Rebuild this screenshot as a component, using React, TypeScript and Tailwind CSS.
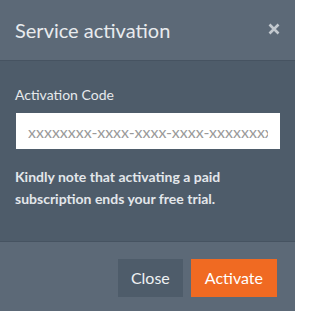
import { useState } from "react";

// Service activation modal: code entry with a notice about the trial.
export default function App() {
  const [code, setCode] = useState("");

  return (
    <div className="flex h-[311px] w-[295px] flex-col bg-[#4e5c6a] font-['Lato',sans-serif]">
      <div className="flex h-[61px] shrink-0 items-center justify-between border-b border-[#465361] bg-[#5c6977] pl-[15px] pr-[15px]">
        <h2 className="text-[20px] leading-none text-[#e8ebee]">Service activation</h2>
        <button type="button" aria-label="Close" className="mb-[3px] text-[#c3c9cf]">
          <svg width="12" height="12" viewBox="0 0 12 12">
            <path d="M1.5 1.5 L10.5 10.5 M10.5 1.5 L1.5 10.5" stroke="currentColor" strokeWidth="2.6" strokeLinecap="butt" />
          </svg>
        </button>
      </div>

      <div className="flex flex-1 flex-col px-[15px] pt-[24px]">
        <label className="flex flex-col text-[14px] leading-[20px] text-[#e6e9ec]">
          Activation Code
          <input
            type="text"
            value={code}
            onChange={(event) => setCode(event.target.value)}
            placeholder="xxxxxxxx-xxxx-xxxx-xxxx-xxxxxxxxxxxx"
            className="mt-[8px] ml-px h-[36px] w-[264px] bg-white px-[12px] font-['Lato',sans-serif] text-[16px] text-[#555] outline-none placeholder:text-[#9a9a9a]"
          />
        </label>
        <p className="mt-[17px] text-[14px] font-bold leading-[22px] text-[#e3e7eb]">
          Kindly note that activating a paid subscription ends your free trial.
        </p>
      </div>

      <div className="flex h-[70px] shrink-0 items-start justify-end gap-[8px] border-t border-[#465361] bg-[#5c6977] pr-[18px] pt-[17px]">
        <button type="button" className="h-[38px] bg-[#4e5c6a] px-[13px] text-[16px] text-[#eef1f3]">
          Close
        </button>
        <button type="button" className="h-[38px] bg-[#f06a22] px-[14px] text-[16px] text-white">
          Activate
        </button>
      </div>
    </div>
  );
}
